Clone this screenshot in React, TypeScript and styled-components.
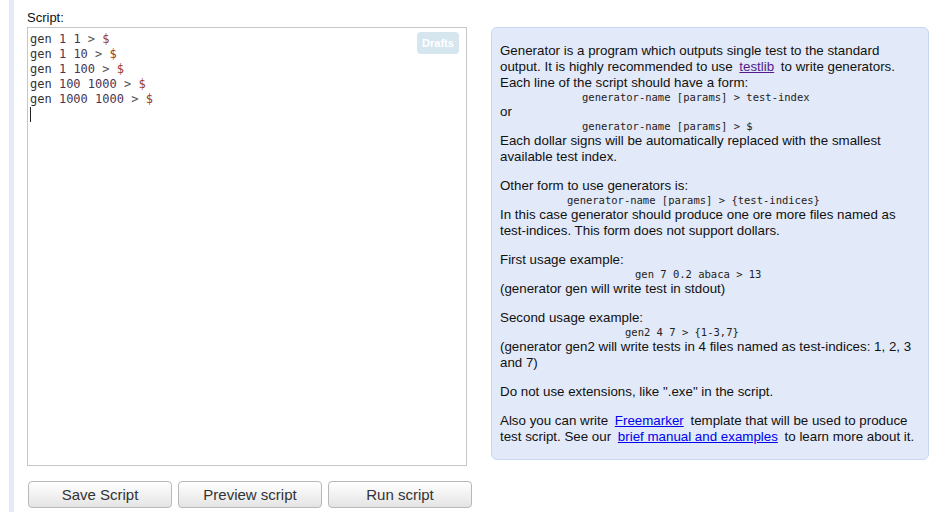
import React from 'react';
import styled, { createGlobalStyle } from 'styled-components';

const GlobalStyle = createGlobalStyle`
  html, body {
    margin: 0;
    padding: 0;
    background: #ffffff;
  }
  body {
    font-family: "Liberation Sans", Arial, sans-serif;
    font-size: 13px;
    color: #222;
  }
`;

const Page = styled.div`
  display: flex;
  min-height: 512px;
  padding-left: 9px;
`;

const SideBar = styled.div`
  width: 5px;
  background: #e4ebf8;
  flex-shrink: 0;
`;

const Main = styled.div`
  display: flex;
  gap: 24px;
  margin-left: 13px;
`;

const LeftColumn = styled.div`
  display: flex;
  flex-direction: column;
  width: 440px;
  padding-top: 10px;
`;

const Label = styled.div`
  line-height: 15px;
  margin-bottom: 2px;
  color: #111;
`;

const Editor = styled.div`
  position: relative;
  height: 430px;
  border: 1px solid #c6c6c6;
  padding: 4px 2px 3px;
  font-family: "DejaVu Sans Mono", monospace;
  font-size: 12px;
  line-height: 15px;
  color: #333;
  white-space: pre;
`;

const CodeLine = styled.div``;

const Num = styled.span`
  color: #4a3550;
`;

const Op = styled.span`
  color: #555;
`;

const Dollar = styled.span`
  color: #9a3a26;
`;

const Cursor = styled.div`
  width: 1px;
  height: 15px;
  background: #222;
`;

const DraftsButton = styled.div`
  position: absolute;
  top: 4px;
  right: 7px;
  width: 42px;
  height: 22px;
  border-radius: 4px;
  background: #d6e6ef;
  color: #fff;
  font-family: "Liberation Sans", Arial, sans-serif;
  font-weight: bold;
  font-size: 11px;
  line-height: 22px;
  text-align: center;
`;

const ButtonRow = styled.div`
  display: flex;
  gap: 6px;
  margin-top: 15px;
  margin-left: 1px;
`;

const Button = styled.button`
  flex-shrink: 0;
  width: 144px;
  height: 27px;
  border: 1px solid #b8b8b8;
  border-radius: 4px;
  background: linear-gradient(#ffffff, #e4e4e4);
  color: #333;
  font-family: "Liberation Sans", Arial, sans-serif;
  font-size: 15px;
  padding: 0;
`;

const InfoPanel = styled.div`
  width: 438px;
  height: 433px;
  box-sizing: border-box;
  margin-top: 27px;
  padding: 15px 12px 12px 8px;
  background: #e2e9f8;
  border: 1px solid #c7d7f2;
  border-radius: 6px;
  font-size: 13.33px;
  line-height: 16px;
  color: #111;
`;

const Para = styled.div`
  margin-bottom: 13px;
`;

const Mono = styled.div<{ $indent: number }>`
  font-family: "DejaVu Sans Mono", monospace;
  font-size: 10.5px;
  line-height: 13px;
  padding-left: ${(p) => p.$indent}px;
  white-space: pre;
  color: #222;
`;

const Link = styled.a<{ $visited?: boolean }>`
  margin: 0 3px;
  color: ${(p) => (p.$visited ? '#551a8b' : '#0000ee')};
  text-decoration: underline;
`;

const code = [
  ['1', '1'],
  ['1', '10'],
  ['1', '100'],
  ['100', '1000'],
  ['1000', '1000'],
];

export default function App() {
  return (
    <>
      <GlobalStyle />
      <Page>
        <SideBar />
        <Main>
          <LeftColumn>
            <Label>Script:</Label>
            <Editor>
              {code.map(([a, b], i) => (
                <CodeLine key={i}>
                  gen <Num>{a}</Num> <Num>{b}</Num> <Op>&gt;</Op> <Dollar>$</Dollar>
                </CodeLine>
              ))}
              <Cursor />
              <DraftsButton>Drafts</DraftsButton>
            </Editor>
            <ButtonRow>
              <Button>Save Script</Button>
              <Button>Preview script</Button>
              <Button>Run script</Button>
            </ButtonRow>
          </LeftColumn>
          <InfoPanel>
            <Para>
              Generator is a program which outputs single test to the standard output. It is highly
              recommended to use <Link $visited href="#">testlib</Link> to write generators.
              <br />
              Each line of the script should have a form:
              <Mono $indent={82}>generator-name [params] &gt; test-index</Mono>
              or
              <Mono $indent={82}>generator-name [params] &gt; $</Mono>
              Each dollar signs will be automatically replaced with the smallest available test index.
            </Para>
            <Para>
              Other form to use generators is:
              <Mono $indent={67}>generator-name [params] &gt; {'{test-indices}'}</Mono>
              In this case generator should produce one ore more files named as test-indices. This form
              does not support dollars.
            </Para>
            <Para>
              First usage example:
              <Mono $indent={135}>gen 7 0.2 abaca &gt; 13</Mono>
              (generator gen will write test in stdout)
            </Para>
            <Para>
              Second usage example:
              <Mono $indent={125}>gen2 4 7 &gt; {'{1-3,7}'}</Mono>
              (generator gen2 will write tests in 4 files named as test-indices: 1, 2, 3 and 7)
            </Para>
            <Para>Do not use extensions, like ".exe" in the script.</Para>
            <Para>
              Also you can write <Link href="#">Freemarker</Link> template that will be used to produce
              test script. See our <Link href="#">brief manual and examples</Link> to learn more about
              it.
            </Para>
          </InfoPanel>
        </Main>
      </Page>
    </>
  );
}
